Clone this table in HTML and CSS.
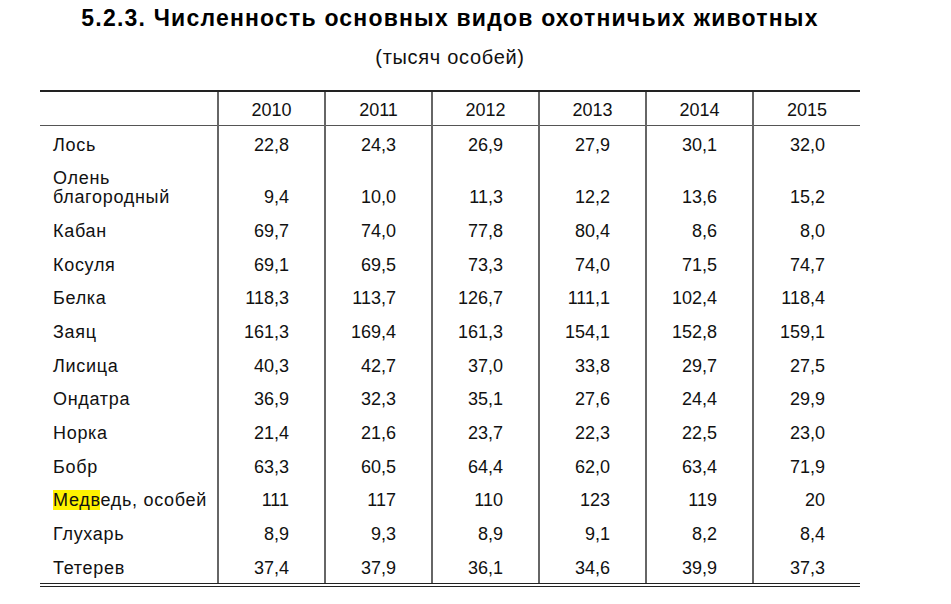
FILE: index.html
```html
<!DOCTYPE html>
<html lang="ru">
<head>
<meta charset="utf-8">
<title>5.2.3. Численность основных видов охотничьих животных</title>
<link rel="stylesheet" href="styles.css">
</head>
<body>
<div class="page">
  <h1 class="title">5.2.3. Численность основных видов охотничьих животных</h1>
  <p class="subtitle">(тысяч особей)</p>
  <table class="data">
    <colgroup>
      <col class="col-name">
      <col class="col-year"><col class="col-year"><col class="col-year">
      <col class="col-year"><col class="col-year"><col class="col-year">
    </colgroup>
    <thead>
      <tr>
        <th class="name"></th>
        <th>2010</th><th>2011</th><th>2012</th><th>2013</th><th>2014</th><th>2015</th>
      </tr>
    </thead>
    <tbody>
      <tr><td class="name">Лось</td><td>22,8</td><td>24,3</td><td>26,9</td><td>27,9</td><td>30,1</td><td>32,0</td></tr>
      <tr><td class="name">Олень<br>благородный</td><td>9,4</td><td>10,0</td><td>11,3</td><td>12,2</td><td>13,6</td><td>15,2</td></tr>
      <tr><td class="name">Кабан</td><td>69,7</td><td>74,0</td><td>77,8</td><td>80,4</td><td>8,6</td><td>8,0</td></tr>
      <tr><td class="name">Косуля</td><td>69,1</td><td>69,5</td><td>73,3</td><td>74,0</td><td>71,5</td><td>74,7</td></tr>
      <tr><td class="name">Белка</td><td>118,3</td><td>113,7</td><td>126,7</td><td>111,1</td><td>102,4</td><td>118,4</td></tr>
      <tr><td class="name">Заяц</td><td>161,3</td><td>169,4</td><td>161,3</td><td>154,1</td><td>152,8</td><td>159,1</td></tr>
      <tr><td class="name">Лисица</td><td>40,3</td><td>42,7</td><td>37,0</td><td>33,8</td><td>29,7</td><td>27,5</td></tr>
      <tr><td class="name">Ондатра</td><td>36,9</td><td>32,3</td><td>35,1</td><td>27,6</td><td>24,4</td><td>29,9</td></tr>
      <tr><td class="name">Норка</td><td>21,4</td><td>21,6</td><td>23,7</td><td>22,3</td><td>22,5</td><td>23,0</td></tr>
      <tr><td class="name">Бобр</td><td>63,3</td><td>60,5</td><td>64,4</td><td>62,0</td><td>63,4</td><td>71,9</td></tr>
      <tr><td class="name"><span class="mark">Медв</span>едь, особей</td><td>111</td><td>117</td><td>110</td><td>123</td><td>119</td><td>20</td></tr>
      <tr><td class="name">Глухарь</td><td>8,9</td><td>9,3</td><td>8,9</td><td>9,1</td><td>8,2</td><td>8,4</td></tr>
      <tr class="last"><td class="name">Тетерев</td><td>37,4</td><td>37,9</td><td>36,1</td><td>34,6</td><td>39,9</td><td>37,3</td></tr>
    </tbody>
  </table>
</div>
</body>
</html>
```

FILE: styles.css
```css
html, body {
  margin: 0;
  padding: 0;
  background: #ffffff;
}

body {
  font-family: "Liberation Sans", Arial, sans-serif;
  color: #111111;
}

.page {
  width: 820px;
  margin-left: 40px;
  padding-top: 6.5px;
}

.title {
  margin: 0;
  font-size: 23px;
  line-height: 23px;
  letter-spacing: 1.2px;
  font-weight: bold;
  text-align: center;
  color: #000000;
}

.subtitle {
  margin: 17.5px 0 0 0;
  font-size: 20px;
  line-height: 20px;
  letter-spacing: 0.7px;
  text-align: center;
}

.data {
  margin-top: 23px;
  width: 820px;
  table-layout: fixed;
  border-collapse: collapse;
  font-size: 18px;
  line-height: 19px;
}

.col-name {
  width: 178px;
}

.col-year {
  width: 107px;
}

.data thead th {
  font-weight: normal;
  text-align: center;
  padding: 8.5px 0 5.5px 0;
  border-top: 2px solid #222222;
  border-bottom: 1.5px solid #555555;
  border-left: 2px solid #666666;
}

.data td {
  text-align: right;
  vertical-align: bottom;
  padding: 9.5px 35px 5.2px 0;
  border-left: 2px solid #666666;
}

.data .name {
  text-align: left;
  padding-left: 13px;
  padding-right: 0;
  letter-spacing: 0.7px;
  border-left: none;
}

.data tr.last td {
  border-bottom: 4px double #222222;
}

.mark {
  background: #fff200;
}
```
